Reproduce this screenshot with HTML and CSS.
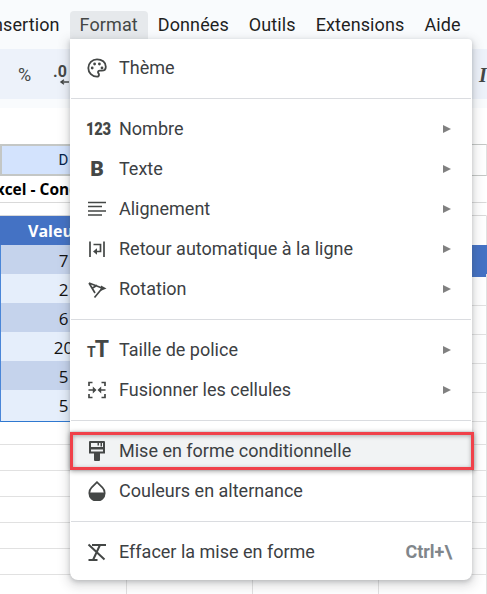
FILE: index.html
```html
<!DOCTYPE html>
<html lang="fr">
<head>
  <meta charset="UTF-8">
  <title>Format</title>
  <link rel="stylesheet" href="styles.css">
</head>
<body>
  <div class="app">
    <nav class="menubar">
      <span>Insertion</span>
      <span class="menu-active">Format</span>
      <span>Données</span>
      <span>Outils</span>
      <span>Extensions</span>
      <span>Aide</span>
    </nav>

    <div class="toolbar">
      <span class="tool-percent">%</span>
      <span class="tool-decimal">.0
        <svg class="tool-arrow" viewBox="0 0 10 6"><path d="M10 3H3M5 .8L2 3l3 2.200" fill="none" stroke="#444746" stroke-width="1.400"/></svg>
      </span>
      <span class="tool-italic">I</span>
    </div>

    <div class="sheet">
      <div class="row row-col"><div class="cell cell-col">D</div><div class="cell"></div><div class="cell"></div><div class="cell"></div></div>
      <div class="row row-title"><div class="cell cell-title">Excel - Cond</div><div class="cell"></div><div class="cell"></div><div class="cell"></div></div>
      <div class="row row-gap"><div class="cell"></div><div class="cell"></div><div class="cell"></div><div class="cell"></div></div>
      <div class="row row-data"><div class="cell cell-head">Valeur</div><div class="cell"></div><div class="cell"></div><div class="cell"></div></div>
      <div class="row row-data"><div class="cell cell-dark">7</div><div class="cell"></div><div class="cell"></div><div class="cell cell-blue"></div></div>
      <div class="row row-data"><div class="cell cell-light">2</div><div class="cell"></div><div class="cell"></div><div class="cell"></div></div>
      <div class="row row-data"><div class="cell cell-dark">6</div><div class="cell"></div><div class="cell"></div><div class="cell"></div></div>
      <div class="row row-data"><div class="cell cell-light">20</div><div class="cell"></div><div class="cell"></div><div class="cell"></div></div>
      <div class="row row-data"><div class="cell cell-dark">5</div><div class="cell"></div><div class="cell"></div><div class="cell"></div></div>
      <div class="row row-data"><div class="cell cell-light cell-last">5</div><div class="cell"></div><div class="cell"></div><div class="cell"></div></div>
      <div class="row"><div class="cell"></div><div class="cell"></div><div class="cell"></div><div class="cell"></div></div>
      <div class="row"><div class="cell"></div><div class="cell"></div><div class="cell"></div><div class="cell"></div></div>
      <div class="row"><div class="cell"></div><div class="cell"></div><div class="cell"></div><div class="cell"></div></div>
      <div class="row"><div class="cell"></div><div class="cell"></div><div class="cell"></div><div class="cell"></div></div>
      <div class="row"><div class="cell"></div><div class="cell"></div><div class="cell"></div><div class="cell"></div></div>
      <div class="row"><div class="cell"></div><div class="cell"></div><div class="cell"></div><div class="cell"></div></div>
      <div class="row"><div class="cell"></div><div class="cell"></div><div class="cell"></div><div class="cell"></div></div>
    </div>
  </div>

  <div class="menu">
    <div class="item">
      <svg class="icon" viewBox="0 0 20 20"><path d="M10 1.300a8.700 8.700 0 0 0 0 17.400c1.200 0 2-.8 2-1.900 0-.6-.2-1-.5-1.300-.3-.4-.5-.7-.5-1.200 0-.9.800-1.600 1.800-1.600h2c2.300 0 4-1.700 4-4C18.800 4.200 14.900 1.300 10 1.300z" fill="none" stroke="#444746" stroke-width="1.800"/><circle cx="5.200" cy="10" r="1.400" fill="#444746"/><circle cx="7.600" cy="6" r="1.400" fill="#444746"/><circle cx="12.400" cy="6" r="1.400" fill="#444746"/><circle cx="15" cy="10" r="1.400" fill="#444746"/></svg>
      <span class="label">Thème</span>
    </div>
    <div class="sep"></div>
    <div class="item">
      <span class="icon glyph-num">123</span>
      <span class="label">Nombre</span><span class="arrow"></span>
    </div>
    <div class="item">
      <span class="icon glyph-bold">B</span>
      <span class="label">Texte</span><span class="arrow"></span>
    </div>
    <div class="item">
      <svg class="icon" viewBox="0 0 20 20"><path d="M1 3.500h18M1 7.500h14M1 12h18M1 16h14" fill="none" stroke="#444746" stroke-width="1.500"/></svg>
      <span class="label">Alignement</span><span class="arrow"></span>
    </div>
    <div class="item">
      <svg class="icon" viewBox="0 0 20 20"><path d="M3 2.500v15.500M17 2.500v15.500" fill="none" stroke="#444746" stroke-width="1.700"/><path d="M6.500 5.500h7v7H9" fill="none" stroke="#444746" stroke-width="1.700"/><path d="M10 9.300L6 12.500l4 3.200z" fill="#444746"/></svg>
      <span class="label">Retour automatique à la ligne</span><span class="arrow"></span>
    </div>
    <div class="item">
      <svg class="icon" viewBox="0 0 20 20"><path d="M2 4l13 5M2 4l6 10M15 9.500L7.500 18.500M4.800 9.500L10 6.300" fill="none" stroke="#444746" stroke-width="1.700"/><path d="M19.500 9.500L14 6.500l-.5 5.500z" fill="#444746"/></svg>
      <span class="label">Rotation</span><span class="arrow"></span>
    </div>
    <div class="sep"></div>
    <div class="item">
      <span class="icon glyph-size"><span class="glyph-small">T</span>T</span>
      <span class="label">Taille de police</span><span class="arrow"></span>
    </div>
    <div class="item">
      <svg class="icon" viewBox="0 0 20 20"><path d="M2 6V2.500h3.500M14.500 2.500H18V6M2 14v3.500h3.500M14.500 17.500H18V14" fill="none" stroke="#444746" stroke-width="1.700"/><path d="M1.500 10h5M18.500 10h-5" stroke="#444746" stroke-width="1.700"/><path d="M9.500 10L5.800 6.500v7zM10.500 10l3.700-3.500v7z" fill="#444746"/></svg>
      <span class="label">Fusionner les cellules</span><span class="arrow"></span>
    </div>
    <div class="sep"></div>
    <div class="item item-hover">
      <svg class="icon" viewBox="0 0 20 20"><path d="M3 0h14a1 1 0 0 1 1 1v11.500h-5V19a1 1 0 0 1-1 1H8a1 1 0 0 1-1-1v-6.500H2V1a1 1 0 0 1 1-1z" fill="#444746"/><path d="M4 2h12v4H4zM4 8.500h12v2H4z" fill="#f1f3f4"/><path d="M10.500 2H12v2.500h-1.500zM13.500 2H15v3.500h-1.500z" fill="#444746"/></svg>
      <span class="label">Mise en forme conditionnelle</span>
    </div>
    <div class="item">
      <svg class="icon" viewBox="0 0 20 20"><path d="M10 1.200L4.500 6.700a7.700 7.700 0 1 0 11 0z" fill="none" stroke="#444746" stroke-width="1.700"/><path d="M2 11.500h16a8 8 0 0 1-16 0z" fill="#444746"/></svg>
      <span class="label">Couleurs en alternance</span>
    </div>
    <div class="sep"></div>
    <div class="item">
      <svg class="icon" viewBox="0 0 20 20"><path d="M5 3h14M1.500 2.500l16 15M13 3L6 18M1.500 18h9" fill="none" stroke="#444746" stroke-width="2"/></svg>
      <span class="label">Effacer la mise en forme</span><span class="shortcut">Ctrl+\</span>
    </div>
    <div class="callout"></div>
  </div>
</body>
</html>
```

FILE: styles.css
```css
* {
  box-sizing: border-box;
}

html, body {
  margin: 0;
  height: 100%;
}

body {
  width: 487px;
  height: 594px;
  overflow: hidden;
  position: relative;
  background: #fff;
  font-family: Roboto, "Liberation Sans", sans-serif;
}

.app {
  height: 594px;
  overflow: hidden;
}

.menubar {
  height: 49px;
  background: #f9fbfd;
  padding-top: 11px;
  display: flex;
  font-size: 18px;
  color: #1f1f1f;
  margin-left: -22px;
  white-space: nowrap;
}

.menubar span {
  height: 28px;
  padding: 3px 10px 0;
  border-radius: 4px 4px 0 0;
  letter-spacing: 0.1px;
}

.menubar .menu-active {
  background: #e6e9ec;
  color: #444746;
}

.toolbar {
  height: 59px;
  background: #edf2fa;
  border-bottom: 9px solid #f9fbfd;
  color: #444746;
  display: flex;
  align-items: center;
  padding: 0 0 0 18px;
  overflow: hidden;
}

.tool-percent {
  width: 35px;
  font-size: 18px;
}

.tool-decimal {
  display: flex;
  flex-direction: column;
  font-weight: 700;
  font-size: 16px;
  line-height: 14px;
  margin-top: 2px;
}

.tool-arrow {
  width: 10px;
  height: 6px;
  margin-left: 6px;
}

.tool-italic {
  margin-left: auto;
  margin-right: -2px;
  margin-top: 3px;
  font-family: "Liberation Serif", serif;
  font-style: italic;
  font-weight: 700;
  font-size: 20px;
  width: 10px;
}

.sheet {
  margin-top: 36px;
}

.row {
  height: 26px;
  display: grid;
  grid-template-columns: 127px 126px 126px 1fr;
}

.row-col {
  height: 30px;
}

.row-title {
  height: 29px;
}

.row-gap {
  height: 13px;
}

.row-data {
  height: 29px;
}

.cell {
  border-right: 1px solid #e1e1e1;
  border-bottom: 1px solid #e1e1e1;
  font-size: 17px;
  line-height: 31px;
  font-family: "Open Sans", "Liberation Sans", sans-serif;
  color: #111;
  text-align: center;
  white-space: nowrap;
}

.row-col .cell {
  border-top: 1px solid #c4c7c5;
  border-bottom-color: #c4c7c5;
}

.row-col .cell-col {
  background: #d3e3fd;
  border: 2px solid #c4c7c5;
  color: #041e49;
  font-family: Roboto, sans-serif;
  font-size: 15px;
  line-height: 28px;
}

.row-title .cell,
.row-gap .cell {
  border-right-color: transparent;
  border-bottom-color: #d9d9d9;
}

.cell-title {
  font-size: 15.5px;
  font-weight: 700;
  color: #000;
  text-align: left;
  text-indent: -13px;
  overflow: hidden;
}

.row-data .cell-head {
  background: #4472c4;
  color: #fff;
  font-size: 16px;
  font-weight: 700;
  text-align: left;
  padding-left: 28px;
}

.cell-blue {
  background: #4472c4;
  border-color: #4472c4;
}

.cell-dark,
.cell-light {
  border-bottom-color: #7fa7e0;
  border-left: 1px solid #4a86d8;
}

.cell-dark {
  background: #c5d3ec;
}

.cell-light {
  background: #e5eefb;
}

.row-data .cell-last {
  border-bottom: 1px solid #2f78d0;
}

.menu {
  position: absolute;
  left: 70px;
  top: 39px;
  width: 402px;
  height: 541px;
  padding-top: 9px;
  background: #fff;
  border-radius: 0 4px 8px 8px;
  box-shadow: 0 2px 4px rgba(60, 64, 67, 0.25), 0 4px 10px 4px rgba(60, 64, 67, 0.13);
}

.item {
  height: 40px;
  display: flex;
  align-items: center;
  padding: 0 16px 0 17px;
  color: #3c4043;
  font-size: 18px;
}

.item-hover {
  background: #f1f3f4;
}

.icon {
  width: 20px;
  height: 20px;
  flex: none;
  margin-right: 12px;
  color: #444746;
  font-weight: 900;
  white-space: nowrap;
}

.glyph-num {
  font-size: 18px;
  line-height: 20px;
  letter-spacing: -0.3px;
  margin-left: -1px;
  margin-right: 13px;
  transform: scaleX(0.82);
  transform-origin: left center;
}

.glyph-bold {
  font-size: 21px;
  line-height: 21px;
  text-align: center;
}

.glyph-size {
  font-size: 23px;
  line-height: 20px;
  font-weight: 700;
  letter-spacing: -1px;
}

.glyph-small {
  font-size: 14px;
}

.label {
  flex: 1;
  white-space: nowrap;
  margin-top: -2px;
}

.arrow {
  width: 0;
  height: 0;
  border-left: 8px solid #808080;
  border-top: 4px solid transparent;
  border-bottom: 4px solid transparent;
  margin-right: 5px;
}

.shortcut {
  font-weight: 700;
  color: #80868b;
  font-size: 18px;
  margin-top: -2px;
  margin-right: 4px;
}

.sep {
  height: 1px;
  background: #dadce0;
  margin: 10px 1px 10px 1px;
}

.callout {
  position: absolute;
  left: 0;
  top: 393px;
  width: 404px;
  height: 38px;
  border: 3px solid #f0414a;
  box-shadow: 0 1px 5px rgba(0, 0, 0, 0.4), inset 0 1px 4px rgba(0, 0, 0, 0.3);
}
```
